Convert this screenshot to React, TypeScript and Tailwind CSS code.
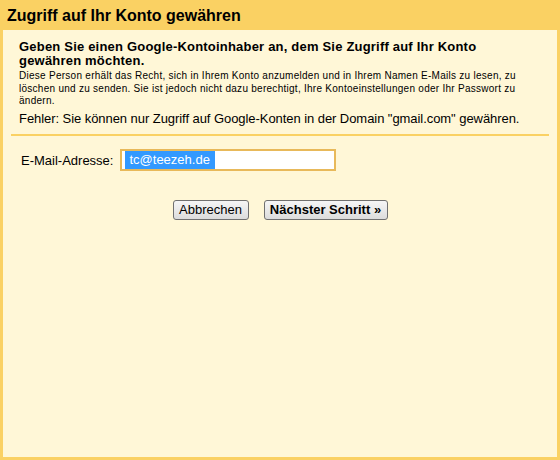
export default function App() {
  return (
    <div className="w-[560px] h-[460px] bg-[#fad163] flex flex-col px-[3px] pb-[3px] font-['Liberation_Sans',Arial,sans-serif] text-black">
      <div className="h-[30px] flex items-center pl-[4px] pt-[2px]">
        <h1 className="text-[16px] font-bold leading-none">Zugriff auf Ihr Konto gewähren</h1>
      </div>
      <div className="flex-1 bg-[#fff7d7] flex flex-col">
        <div className="px-4 pt-[10px]">
          <p className="text-[13px] font-bold leading-[14px] tracking-[0.2px]">
            Geben Sie einen Google-Kontoinhaber an, dem Sie Zugriff auf Ihr Konto gewähren möchten.
          </p>
          <p className="text-[10px] leading-[12.5px] mt-[2px] tracking-[0.27px] whitespace-nowrap">
            Diese Person erhält das Recht, sich in Ihrem Konto anzumelden und in Ihrem Namen E-Mails zu lesen, zu
            <br />
            löschen und zu senden. Sie ist jedoch nicht dazu berechtigt, Ihre Kontoeinstellungen oder Ihr Passwort zu
            <br />
            ändern.
          </p>
          <p className="text-[13px] leading-[15px] mt-[3px] tracking-[-0.06px]">
            Fehler: Sie können nur Zugriff auf Google-Konten in der Domain "gmail.com" gewähren.
          </p>
        </div>
        <div className="mx-2 mt-[8px] h-[2px] bg-[#fad163]" />
        <div className="flex items-start mt-[13px] pl-[18px] gap-[7px]">
          <label className="text-[13px] leading-[15px] pt-[4px]">E-Mail-Adresse:</label>
          <div className="w-[216px] h-[22px] border-2 border-[#e8b95a] bg-white flex items-center pl-[3px]">
            <span className="bg-[#3399ff] text-white text-[13px] leading-[18px] px-[4px] pr-[5px]">tc@teezeh.de</span>
          </div>
        </div>
        <div className="flex justify-center gap-[15px] mt-[29px]">
          <button className="h-[20px] w-[76px] rounded-[3px] border border-[#707070] bg-gradient-to-b from-[#f6f6f6] to-[#dcdcdc] text-[13px] leading-none">
            Abbrechen
          </button>
          <button className="h-[20px] w-[124px] rounded-[3px] border border-[#707070] bg-gradient-to-b from-[#f6f6f6] to-[#dcdcdc] text-[13px] font-bold leading-none">
            Nächster Schritt »
          </button>
        </div>
      </div>
    </div>
  )
}
